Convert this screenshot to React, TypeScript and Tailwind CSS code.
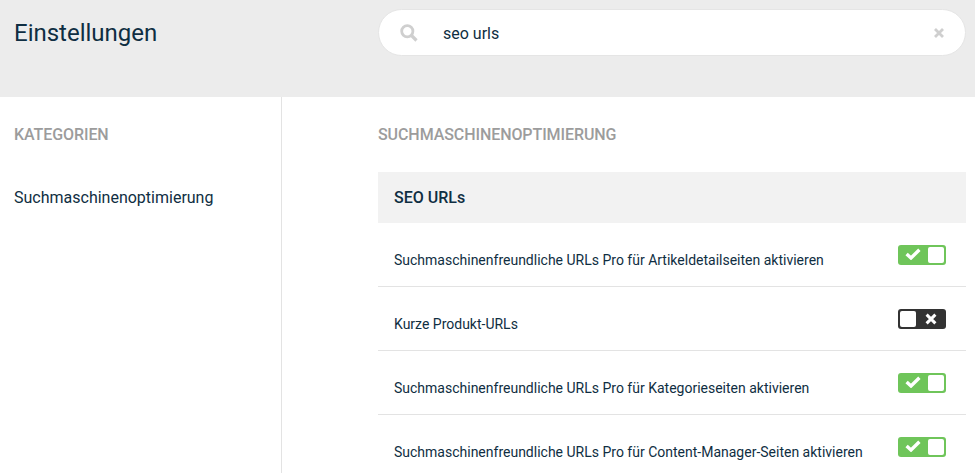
const ROWS = [
  { label: "Suchmaschinenfreundliche URLs Pro für Artikeldetailseiten aktivieren", on: true },
  { label: "Kurze Produkt-URLs", on: false },
  { label: "Suchmaschinenfreundliche URLs Pro für Kategorieseiten aktivieren", on: true },
  { label: "Suchmaschinenfreundliche URLs Pro für Content-Manager-Seiten aktivieren", on: true },
];

function Toggle({ on }: { on: boolean }) {
  return (
    <div
      className={`flex h-5 w-12 items-center justify-between rounded-[3px] px-[2px] ${on ? "bg-[#6fc55a]" : "bg-[#333333]"}`}
    >
      {on ? (
        <>
          <svg width="16" height="12" viewBox="0 0 16 12" className="ml-[5px] mb-[2px]">
            <path d="M1.6 6 L6 10 L14.4 1.8" fill="none" stroke="#fff" strokeWidth="3.4" />
          </svg>
          <span className="h-4 w-4 rounded-[2px] bg-white" />
        </>
      ) : (
        <>
          <span className="h-4 w-4 rounded-[2px] bg-white" />
          <svg width="12" height="12" viewBox="0 0 12 12" className="mr-[7px] mb-[1px]">
            <path d="M1.6 1.6 L10.4 10.4 M10.4 1.6 L1.6 10.4" fill="none" stroke="#fff" strokeWidth="3" />
          </svg>
        </>
      )}
    </div>
  );
}

export default function App() {
  return (
    <div className="h-[473px] w-[975px] overflow-hidden bg-white font-['Roboto',sans-serif] text-[#0f2e42]">
      {/* Kopfbereich mit Suche */}
      <header className="flex h-[97px] items-start justify-between bg-[#ececec] pr-[9px] pl-[14px]">
        <h1 className="mt-[17px] text-[24px] leading-[32px] font-normal">Einstellungen</h1>
        <div className="mt-[9px] flex h-[47px] w-[588px] items-center rounded-full border border-[#e5e5e5] bg-white pr-[21px] pl-[21px]">
          <svg width="18" height="18" viewBox="0 0 18 18">
            <circle cx="7.3" cy="7.3" r="5.6" fill="none" stroke="#cfcfcf" strokeWidth="2.8" />
            <path d="M11.5 11.5 L16.5 16.5" stroke="#cfcfcf" strokeWidth="3.2" />
          </svg>
          <span className="mt-[2px] ml-[25px] flex-1 text-[16px]">seo urls</span>
          <svg width="10" height="10" viewBox="0 0 10 10">
            <path d="M1 1 L9 9 M9 1 L1 9" fill="none" stroke="#cfcfcf" strokeWidth="2.8" />
          </svg>
        </div>
      </header>

      <div className="flex h-[376px]">
        <aside className="w-[282px] shrink-0 border-r border-[#e3e3e3] pl-[14px]">
          <h2 className="mt-[28px] text-[16px] leading-[20px] font-medium tracking-[-0.08px] text-[#9c9c9c]">KATEGORIEN</h2>
          <p className="mt-[43px] text-[16px] leading-[20px]">Suchmaschinenoptimierung</p>
        </aside>

        <main className="flex-1 pr-[9px] pl-[96px]">
          <h2 className="mt-[28px] text-[16px] leading-[20px] font-medium tracking-[-0.08px] text-[#9c9c9c]">SUCHMASCHINENOPTIMIERUNG</h2>
          <div className="mt-[27px] flex h-[51px] items-center bg-[#f2f2f2] px-4 text-[16px] font-medium">SEO URLs</div>
          {ROWS.map((row) => (
            <div key={row.label} className="flex h-16 items-center justify-between border-b border-[#e3e3e3] pr-5 pl-4">
              <span className="mt-[11px] text-[14px] leading-[20px]">{row.label}</span>
              <div className="mt-[1px]">
                <Toggle on={row.on} />
              </div>
            </div>
          ))}
        </main>
      </div>
    </div>
  );
}
